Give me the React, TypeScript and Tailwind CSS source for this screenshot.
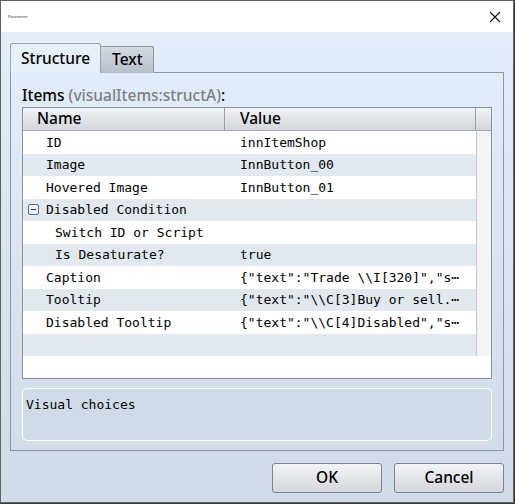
import React from 'react';

const mono = { fontFamily: '"DejaVu Sans Mono", "Liberation Mono", monospace' };
const sans = { fontFamily: '"Noto Sans", "Open Sans", sans-serif' };

type Row = { name: string; value: string; indent?: number; group?: boolean };

const rows: Row[] = [
  { name: 'ID', value: 'innItemShop', indent: 1 },
  { name: 'Image', value: 'InnButton_00', indent: 1 },
  { name: 'Hovered Image', value: 'InnButton_01', indent: 1 },
  { name: 'Disabled Condition', value: '', indent: 1, group: true },
  { name: 'Switch ID or Script', value: '', indent: 2 },
  { name: 'Is Desaturate?', value: 'true', indent: 2 },
  { name: 'Caption', value: '{"text":"Trade \\\\I[320]","s\u22ef', indent: 1 },
  { name: 'Tooltip', value: '{"text":"\\\\C[3]Buy or sell.\u22ef', indent: 1 },
  { name: 'Disabled Tooltip', value: '{"text":"\\\\C[4]Disabled","s\u22ef', indent: 1 },
  { name: '', value: '' },
];

const App = () => {
  return (
    <div className="w-[515px] h-[504px] bg-[#3a3a3a] overflow-hidden">
      <div className="w-[514px] h-[503px] border border-[#5f6368] flex flex-col bg-gradient-to-b from-[#e4effb] to-[#d0dbe7]">
        {/* title bar */}
        <div className="h-[31px] bg-white flex items-center justify-between pl-[7px] pr-[12px] shrink-0">
          <span className="text-[4px] text-[#333]" style={sans}>Parameter</span>
          <svg width="12" height="12" viewBox="0 0 12 12" className="mt-[1px]">
            <path d="M1 1 L11 11 M11 1 L1 11" stroke="#111" strokeWidth="1.1" fill="none" />
          </svg>
        </div>

        <div className="flex flex-col px-[9px] pt-[11px]">
          {/* tabs */}
          <div className="flex items-end h-[30px] relative z-10">
            <div
              className="w-[91px] h-[30px] bg-[#e6f0fb] border border-b-0 border-[#9aa2aa] rounded-t-[3px] flex items-center pl-[10px] text-[15.5px] font-medium text-black"
              style={sans}
            >
              Structure
            </div>
            <div
              className="w-[53px] h-[27px] bg-gradient-to-b from-[#d3d9e0] to-[#b8c0ca] border border-l-0 border-b-0 border-[#8e969f] rounded-tr-[3px] flex items-center pl-[11px] text-[15.5px] font-medium text-black"
              style={sans}
            >
              Text
            </div>
          </div>

          {/* panel */}
          <div className="-mt-[1px] h-[379px] border border-[#8e969e] flex flex-col px-[11px] pt-[12px]">
            <div className="text-[15.5px] font-medium leading-[20px] h-[22px]" style={sans}>
              <span className="text-black">Items</span>{' '}
              <span className="text-[#7b7f84]">(visualItems:structA)</span>
              <span className="text-black">:</span>
            </div>

            {/* table */}
            <div className="h-[272px] border border-[#8c9299] bg-white flex flex-col">
              <div className="h-[23px] flex border-b border-[#a3a8ae] bg-gradient-to-b from-[#f1f2f4] to-[#d3d7dc] text-[15.5px] font-medium shrink-0" style={sans}>
                <div className="w-[202px] border-r border-[#9aa0a6] pl-[14px] flex items-center">Name</div>
                <div className="w-[251px] border-r border-[#9aa0a6] pl-[15px] flex items-center">Value</div>
                <div className="flex-1" />
              </div>
              <div className="flex">
                <div className="w-[453px]">
                  {rows.map((r, i) => (
                    <div
                      key={i}
                      className={`h-[22.5px] flex items-center text-[13px] text-black ${i % 2 === 1 ? 'bg-[#e2e8ef]' : 'bg-white'}`}
                      style={mono}
                    >
                      <div className="w-[202px] flex items-center">
                        {r.group ? (
                          <>
                            <span className="ml-[5px] w-[11px] h-[11px] border border-[#5a6b8c] rounded-[2px] flex items-center justify-center bg-[#eef2f8]">
                              <span className="w-[5px] h-[1px] bg-[#2b3a5a]" />
                            </span>
                            <span className="ml-[7px]">{r.name}</span>
                          </>
                        ) : (
                          <span className={r.indent === 2 ? 'pl-[32px]' : 'pl-[23px]'}>{r.name}</span>
                        )}
                      </div>
                      <div className="pl-[15px] whitespace-pre">{r.value}</div>
                    </div>
                  ))}
                </div>
                <div className="flex-1 border-l border-[#c5cad0] bg-[#f3f4f6]" />
              </div>
            </div>

            {/* description */}
            <div className="mt-[9px] h-[53px] rounded-[5px] border-[1.5px] border-white bg-[#cfdbe7] px-[3px] pt-[6px] text-[13px] text-black" style={mono}>
              Visual choices
            </div>
          </div>

          {/* buttons */}
          <div className="flex justify-end gap-[12px] mt-[12px]">
            {['OK', 'Cancel'].map((b) => (
              <div
                key={b}
                className="w-[110px] h-[30px] border border-[#7f858c] rounded-[3px] bg-gradient-to-b from-[#f3f4f6] to-[#d3d7dd] flex items-center justify-center text-[15.5px] font-medium text-black"
                style={sans}
              >
                {b}
              </div>
            ))}
          </div>
        </div>
      </div>
    </div>
  );
};

export default App;
